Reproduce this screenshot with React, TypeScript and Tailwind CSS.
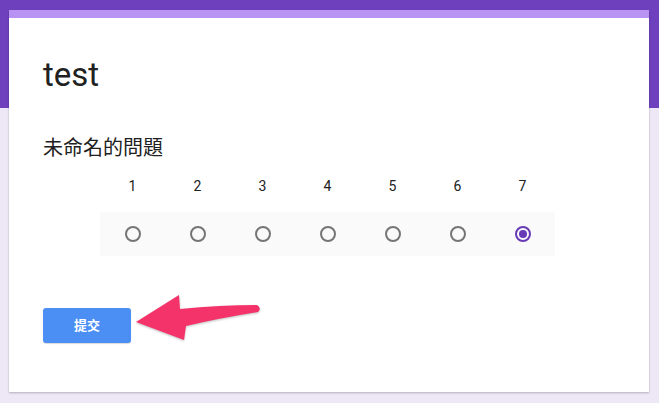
import React from "react";

const scale = [1, 2, 3, 4, 5, 6, 7];

function Radio({ checked }: { checked?: boolean }) {
  // Google-forms style radio circle
  return (
    <svg width="18" height="18" viewBox="0 0 18 18">
      <circle
        cx="9"
        cy="9"
        r="7"
        fill="none"
        stroke={checked ? "#673ab7" : "#757575"}
        strokeWidth="2"
      />
      {checked && <circle cx="9" cy="9" r="4" fill="#673ab7" />}
    </svg>
  );
}

function Arrow() {
  return (
    <svg width="140" height="60" viewBox="130 285 140 60" className="-ml-[1px] -mt-[23px] drop-shadow-[0_1px_1px_rgba(0,0,0,0.25)]">
      <path
        d="M136,322 L179,295 L180,309 Q220,305 257,305 Q262,308 258,312 Q220,318 186,326 L184,340 Z"
        fill="#f5336b"
      />
    </svg>
  );
}

export default function App() {
  return (
    <div
      className="w-full h-[403px] overflow-hidden bg-[linear-gradient(#6e40bd_0_108px,#ede7f6_108px)] pt-[10px] px-[9px]"
      style={{ fontFamily: 'Roboto, "Noto Sans CJK TC", sans-serif' }}
    >
      <div className="w-[640px] h-[382px] bg-white border-t-[8px] border-[#b893f4] shadow-[0_1px_2px_rgba(0,0,0,0.25)]">
        <div className="pl-[34px] pt-[37px]">
          <h1 className="text-[33px] leading-[40px] text-[#212121]">test</h1>
          <div className="mt-[41px] text-[20px] leading-[24px] text-[#212121]">未命名的問題</div>
        </div>

        <div className="ml-[91px] mt-[16px] w-[455px]">
          <div className="flex">
            {scale.map((n) => (
              <div key={n} className="w-[65px] text-center text-[14px] leading-[20px] text-[#212121]">
                {n}
              </div>
            ))}
          </div>
          <div className="mt-[16px] flex h-[44px] items-center bg-[#fafafa]">
            {scale.map((n) => (
              <div key={n} className="w-[65px] flex justify-center">
                <Radio checked={n === 7} />
              </div>
            ))}
          </div>
        </div>

        <div className="mt-[52px] pl-[34px] flex items-start">
          <button className="w-[88px] h-[35px] rounded-[3px] bg-[#4b8ff5] text-white text-[13px] font-bold shadow-[0_1px_1px_rgba(0,0,0,0.15)]">
            提交
          </button>
          <Arrow />
        </div>
      </div>
    </div>
  );
}
